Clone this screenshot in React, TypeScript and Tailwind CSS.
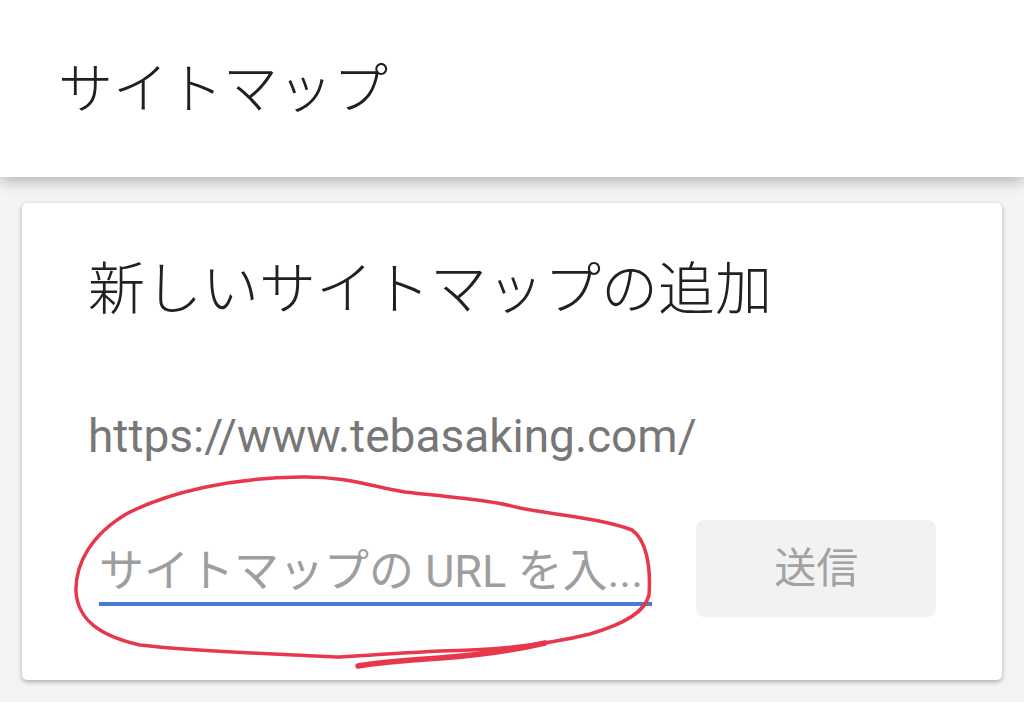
import React from "react";

const FONT = 'Roboto, "Noto Sans CJK JP", "Noto Sans", sans-serif';

// hand-drawn marker loop around the input (annotation over the page)
const Scribble: React.FC = () => (
  <svg
    className="pointer-events-none absolute left-0 top-0"
    width={1024}
    height={702}
    viewBox="0 0 1024 702"
    fill="none"
  >
    <path
      d="M340 657 C 280 654, 200 652, 140 645 C 100 636, 78 620, 76 592 C 75 565, 90 535, 128 513 C 170 492, 230 478, 300 477 C 345 476, 370 486, 405 492 C 450 497, 490 500, 520 508 C 555 515, 600 518, 632 530 C 646 540, 651 565, 649 595 C 645 612, 625 624, 590 634 C 550 644, 500 650, 440 651 C 400 653, 370 655, 340 657"
      stroke="#e8374b"
      strokeWidth={3.5}
      strokeLinecap="round"
      strokeLinejoin="round"
    />
    <path
      d="M358 666 C 380 662, 410 660, 440 658 C 480 655, 515 650, 545 643"
      stroke="#e8374b"
      strokeWidth={5.5}
      strokeLinecap="round"
    />
  </svg>
);

const App: React.FC = () => {
  return (
    <div
      className="relative flex h-[702px] w-[1024px] flex-col overflow-hidden bg-[#f4f4f4]"
      style={{ fontFamily: FONT }}
    >
      <header className="relative z-10 flex h-[177px] shrink-0 items-center bg-white px-[58px] shadow-[0_4px_14px_rgba(0,0,0,0.28)]">
        <h1 className="text-[55px] font-light leading-[56px] text-[#202020]">サイトマップ</h1>
      </header>

      <main className="px-[22px] pt-[26px]">
        <section className="flex h-[477px] flex-col rounded-[5px] bg-white px-[66px] pt-[59px] shadow-[0_2px_5px_rgba(0,0,0,0.3)]">
          <h2 className="text-[57px] font-light leading-[56px] text-[#212121]">新しいサイトマップの追加</h2>

          <p className="mt-[92px] text-[46px] leading-[52px] text-[#777777]">https://www.tebasaking.com/</p>

          <div className="mt-[58px] flex items-start">
            <div className="ml-[11px] flex h-[86px] w-[554px] items-end">
              <input
                type="text"
                placeholder="サイトマップの URL を入..."
                className="w-full border-b-4 border-[#4a7bd3] bg-transparent pb-[4px] text-[45px] leading-[44px] text-[#212121] outline-none placeholder:text-[#9e9e9e]"
                style={{ fontFamily: FONT }}
              />
            </div>
            <button
              type="button"
              disabled
              className="ml-[44px] flex h-[97px] w-[240px] items-center justify-center rounded-[8px] bg-[#f2f2f2] text-[42px] leading-none text-[#a2a2a2]"
              style={{ fontFamily: FONT }}
            >
              送信
            </button>
          </div>
        </section>
      </main>

      <Scribble />
    </div>
  );
};

export default App;
